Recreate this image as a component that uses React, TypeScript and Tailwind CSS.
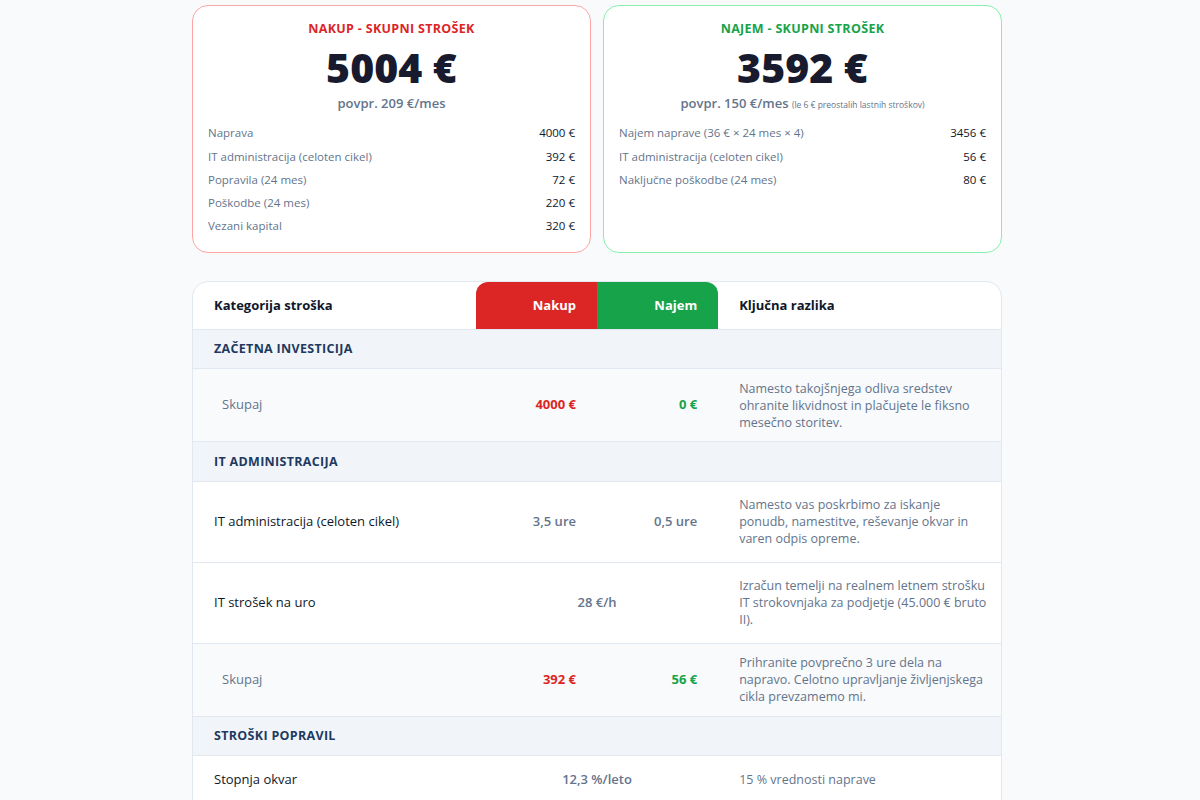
import React from "react";

const font = { fontFamily: '"Open Sans", "Noto Sans", sans-serif' };

function CardRow({ label, value }: { label: string; value: string }) {
  return (
    <div className="flex justify-between items-center h-[23.25px] text-[11.5px]">
      <span className="text-[#64748b]">{label}</span>
      <span className="text-[#0f172a] font-medium">{value}</span>
    </div>
  );
}

function SectionRow({ title }: { title: string }) {
  return (
    <tr className="bg-[#f1f5f9] border-b border-[#e2e8f0]">
      <td colSpan={4} className="px-[21px] pt-[2px] h-[39.5px] text-[12.5px] font-bold tracking-wide text-[#1e3a5f] uppercase">
        {title}
      </td>
    </tr>
  );
}

function Desc({ lines, py }: { lines: string[]; py: string }) {
  return (
    <td className={`pl-[21px] pr-[6px] ${py} text-[12.5px] leading-[17px] text-[#64748b] whitespace-nowrap`}>
      {lines.map((l, i) => (
        <div key={i}>{l}</div>
      ))}
    </td>
  );
}

function TotalRow({ a, b, lines }: { a: string; b: string; lines: string[] }) {
  return (
    <tr className="bg-[#f8fafc] border-b border-[#e2e8f0]">
      <td className="pl-[29px] pr-5 text-[13px] text-[#64748b]">Skupaj</td>
      <td className="pr-[21px] text-right text-[13px] font-bold text-[#dc2626]">{a}</td>
      <td className="pr-[21px] text-right text-[13px] font-bold text-[#16a34a]">{b}</td>
      <Desc lines={lines} py="py-[10.5px]" />
    </tr>
  );
}

function ValueRow({ label, a, b, lines }: { label: string; a: string; b: string; lines: string[] }) {
  return (
    <tr className="bg-white border-b border-[#e2e8f0]">
      <td className="px-[21px] text-[13px] text-[#0f172a]">{label}</td>
      <td className="pr-[21px] text-right text-[13px] font-semibold text-[#64748b]">{a}</td>
      <td className="pr-[21px] text-right text-[13px] font-semibold text-[#64748b]">{b}</td>
      <Desc lines={lines} py="py-[14.5px]" />
    </tr>
  );
}

function SpanRow({ label, v, lines, py = "py-[14.5px]" }: { label: string; v: string; lines: string[]; py?: string }) {
  return (
    <tr className="bg-white border-b border-[#e2e8f0]">
      <td className="px-[21px] text-[13px] text-[#0f172a]">{label}</td>
      <td colSpan={2} className="text-center text-[13px] font-semibold text-[#64748b]">{v}</td>
      <Desc lines={lines} py={py} />
    </tr>
  );
}

export default function App() {
  return (
    <div className="min-h-screen bg-[#f8fafc]" style={font}>
      <div className="w-[810px] ml-[192px] pt-[5px] pb-10">
        <div className="grid grid-cols-2 gap-[12px]">
          <div className="bg-white border border-[#fca5a5] rounded-2xl px-[15px] pt-[14px] h-[248px]">
            <div className="text-center text-[12.5px] font-bold tracking-wide text-[#dc2626]">NAKUP - SKUPNI STROŠEK</div>
            <div className="text-center text-[41px] font-extrabold text-[#181a2e] leading-[50px] mt-[3px]">5004 €</div>
            <div className="text-center text-[13px] font-semibold text-[#64748b] mt-[2px]">povpr. 209 €/mes</div>
            <div className="mt-[8px]">
              <CardRow label="Naprava" value="4000 €" />
              <CardRow label="IT administracija (celoten cikel)" value="392 €" />
              <CardRow label="Popravila (24 mes)" value="72 €" />
              <CardRow label="Poškodbe (24 mes)" value="220 €" />
              <CardRow label="Vezani kapital" value="320 €" />
            </div>
          </div>
          <div className="bg-white border border-[#86efac] rounded-2xl px-[15px] pt-[14px] h-[248px]">
            <div className="text-center text-[12.5px] font-bold tracking-wide text-[#16a34a]">NAJEM - SKUPNI STROŠEK</div>
            <div className="text-center text-[41px] font-extrabold text-[#181a2e] leading-[50px] mt-[3px]">3592 €</div>
            <div className="text-center text-[13px] font-semibold text-[#64748b] mt-[2px]">
              povpr. 150 €/mes <span className="text-[8.5px] font-medium">(le 6 € preostalih lastnih stroškov)</span>
            </div>
            <div className="mt-[8px]">
              <CardRow label="Najem naprave (36 € × 24 mes × 4)" value="3456 €" />
              <CardRow label="IT administracija (celoten cikel)" value="56 €" />
              <CardRow label="Naključne poškodbe (24 mes)" value="80 €" />
            </div>
          </div>
        </div>

        <div className="mt-[28px] bg-white border border-[#e2e8f0] rounded-t-2xl overflow-hidden">
          <table className="w-full table-fixed border-collapse">
            <colgroup>
              <col className="w-[35%]" />
              <col className="w-[15%]" />
              <col className="w-[15%]" />
              <col className="w-[35%]" />
            </colgroup>
            <thead>
              <tr className="border-b border-[#e2e8f0]">
                <th className="h-[47px] px-[21px] text-left text-[13px] font-bold text-[#0f172a]">Kategorija stroška</th>
                <th className="pr-[21px] text-right text-[13px] font-bold text-white bg-[#dc2626] rounded-tl-xl">Nakup</th>
                <th className="pr-[21px] text-right text-[13px] font-bold text-white bg-[#16a34a] rounded-tr-xl">Najem</th>
                <th className="px-[21px] text-left text-[13px] font-bold text-[#0f172a]">Ključna razlika</th>
              </tr>
            </thead>
            <tbody>
              <SectionRow title="Začetna investicija" />
              <TotalRow
                a="4000 €"
                b="0 €"
                lines={["Namesto takojšnjega odliva sredstev", "ohranite likvidnost in plačujete le fiksno", "mesečno storitev."]}
              />
              <SectionRow title="IT administracija" />
              <ValueRow
                label="IT administracija (celoten cikel)"
                a="3,5 ure"
                b="0,5 ure"
                lines={["Namesto vas poskrbimo za iskanje", "ponudb, namestitve, reševanje okvar in", "varen odpis opreme."]}
              />
              <SpanRow
                label="IT strošek na uro"
                v="28 €/h"
                lines={["Izračun temelji na realnem letnem strošku", "IT strokovnjaka za podjetje (45.000 € bruto", "II)."]}
              />
              <TotalRow
                a="392 €"
                b="56 €"
                lines={["Prihranite povprečno 3 ure dela na", "napravo. Celotno upravljanje življenjskega", "cikla prevzamemo mi."]}
              />
              <SectionRow title="Stroški popravil" />
              <SpanRow label="Stopnja okvar" v="12,3 %/leto" lines={["15 % vrednosti naprave"]} py="py-[15px]" />
            </tbody>
          </table>
        </div>
      </div>
    </div>
  );
}
